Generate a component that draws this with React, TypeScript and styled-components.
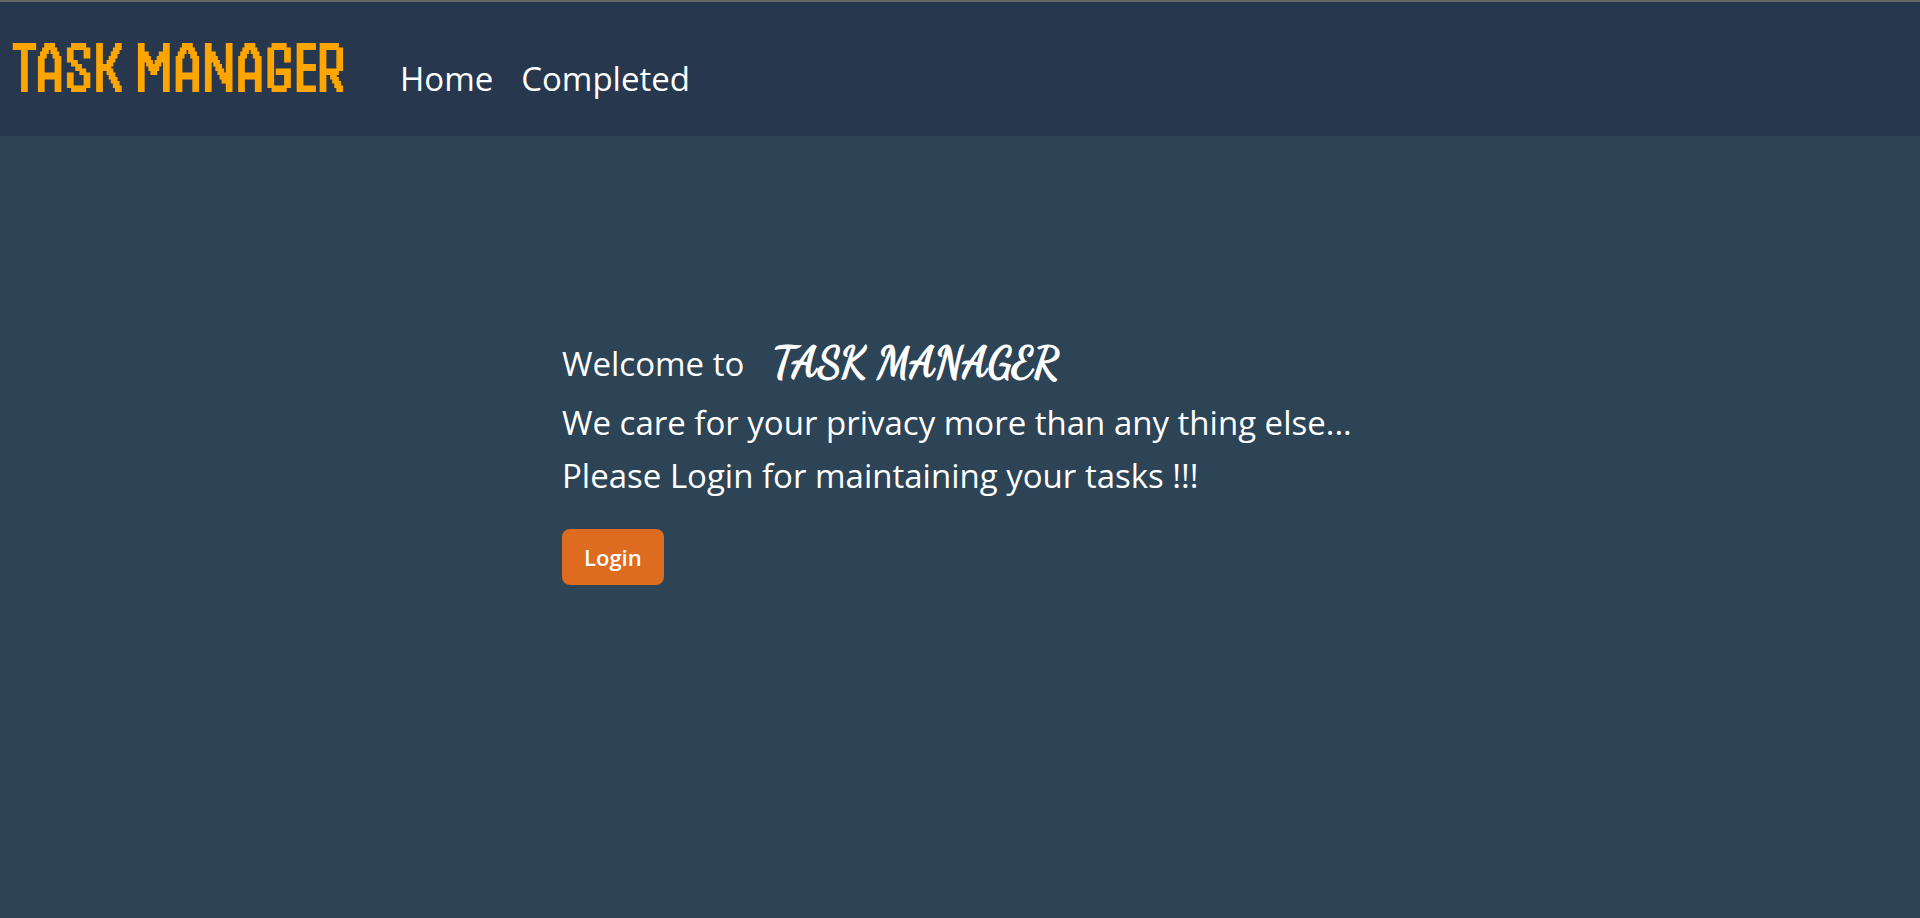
import React from "react";
import styled, { createGlobalStyle } from "styled-components";

const GlobalStyle = createGlobalStyle`
  *, *::before, *::after { box-sizing: border-box; }
  body {
    margin: 0;
    background: #2d4356;
    color: #ffffff;
    font-family: "Segoe UI", "Open Sans", "Noto Sans", sans-serif;
    font-size: 33px;
    line-height: 53px;
  }
`;

const Page = styled.div`
  min-height: 100vh;
  background: #2d4356;
`;

const Header = styled.header`
  display: flex;
  align-items: baseline;
  gap: 56px;
  padding: 31px 14px;
  border-top: 2px solid #666864;
  background: #27374d;
`;

const Brand = styled.a`
  color: #ffa500;
  font-family: "Handjet", "DejaVu Sans Condensed", sans-serif;
  font-size: 71px;
  font-weight: 700;
  line-height: 70px;
  text-decoration: none;
  white-space: nowrap;
`;

const Nav = styled.nav`
  display: flex;
  gap: 28px;
`;

const NavLink = styled.a`
  color: inherit;
  text-decoration: none;
`;

const Main = styled.main`
  display: flex;
  justify-content: center;
  padding: 195px 16px 32px;
`;

const Welcome = styled.section`
  width: 100%;
  max-width: 796px;
`;

const Heading = styled.h1`
  display: flex;
  align-items: baseline;
  gap: 28px;
  margin: 0;
  font-size: inherit;
  font-weight: 400;
  line-height: 64px;
`;

const ScriptName = styled.span`
  font-family: "Dancing Script", cursive;
  font-size: 41px;
  font-weight: 700;
  -webkit-text-stroke: 1px currentColor;
`;

const Line = styled.p`
  margin: 0;
`;

const LoginButton = styled.button`
  margin-top: 27px;
  padding: 12px 22px;
  border: 0;
  border-radius: 8px;
  background: #dd6b20;
  color: #ffffff;
  font-family: inherit;
  font-size: 22px;
  font-weight: 600;
  line-height: 32px;
  cursor: pointer;
`;

export default function App() {
  return (
    <Page>
      <GlobalStyle />
      <Header>
        <Brand href="#">TASK MANAGER</Brand>
        <Nav>
          <NavLink href="#home">Home</NavLink>
          <NavLink href="#completed">Completed</NavLink>
        </Nav>
      </Header>
      <Main>
        <Welcome>
          <Heading>
            Welcome to <ScriptName>TASK MANAGER</ScriptName>
          </Heading>
          <Line>We care for your privacy more than any thing else...</Line>
          <Line>Please Login for maintaining your tasks !!!</Line>
          <LoginButton type="button">Login</LoginButton>
        </Welcome>
      </Main>
    </Page>
  );
}
